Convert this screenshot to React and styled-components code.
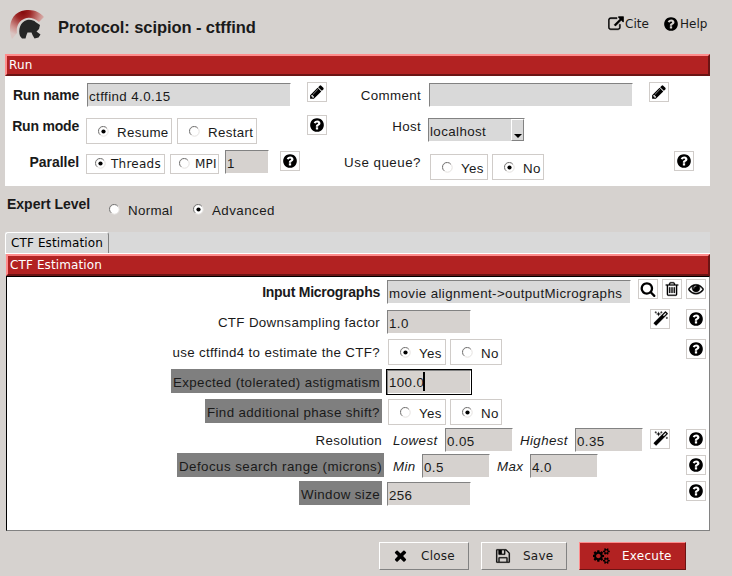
import React from "react";
import styled, { createGlobalStyle, css } from "styled-components";

const GlobalStyle = createGlobalStyle`
  * { box-sizing: border-box; }
  html, body { margin: 0; padding: 0; background: #d6d2cf; }
  body { font-family: "Liberation Sans", sans-serif; overflow: hidden; }
`;

const sans = `"Liberation Sans", sans-serif`;
const deja = `"DejaVu Sans", sans-serif`;

/* shared spacing for items that sit in a row */
const spaced = css`
  flex: none;
  margin-left: ${(p) => p.$l || 0}px;
  margin-top: ${(p) => p.$t || 0}px;
`;

const Window = styled.div`
  width: 732px;
  height: 576px;
  background: #d6d2cf;
  color: #1a1a1a;
  font: 13.33px ${sans};
  display: flex;
  flex-direction: column;
`;
const Header = styled.header`
  display: flex;
  height: 54px;
  padding-left: 9px;
`;
const Title = styled.h1`
  margin: 17px 0 0 14px;
  width: 536px;
  font: bold 16.5px/20px ${sans};
  letter-spacing: -0.08px;
`;
const HeaderLink = styled.a`
  ${spaced}
  display: flex;
  font: 12px/16px ${deja};
  white-space: nowrap;
  width: ${(p) => p.$w}px;
  svg { flex: none; margin-right: 1px; }
`;
const SectionBar = styled.div`
  height: 22px;
  margin: 0 22px 0 ${(p) => p.$l}px;
  padding-left: 2px;
  background: #b22222;
  border: 2px solid;
  border-color: #ff8c8c #6b1414 #6b1414 #ff8c8c;
  color: #fff;
  font: 12px/18px ${deja};
  letter-spacing: 0.12px;
`;
const RunPanel = styled.section`
  height: 110px;
  margin: 0 22px 0 5px;
  background: #fff;
`;
const Row = styled.div`
  display: flex;
  align-items: flex-start;
  height: ${(p) => p.$h}px;
`;
const Label = styled.label`
  ${spaced}
  width: ${(p) => p.$w}px;
  text-align: ${(p) => (p.$left ? "left" : "right")};
  font: ${(p) => (p.$bold ? "bold 14px" : "13.33px")}/18px ${sans};
  letter-spacing: ${(p) => p.$s ?? (p.$bold ? -0.2 : 0.35)}px;
  white-space: nowrap;
`;
const LabelCell = styled.div`
  display: flex;
  justify-content: flex-end;
  flex: none;
  width: ${(p) => p.$w || 375}px;
`;
const AdvancedLabel = styled.label`
  ${spaced}
  width: ${(p) => p.$w}px;
  height: 24px;
  padding-left: 2px;
  background: #7f7f7f;
  font: 13.33px/27px ${sans};
  letter-spacing: ${(p) => p.$s ?? 0.38}px;
  white-space: nowrap;
`;
const Hint = styled.em`
  ${spaced}
  width: ${(p) => p.$w}px;
  font: italic 13.33px/18px ${sans};
  letter-spacing: ${(p) => p.$s ?? 0.38}px;
  white-space: nowrap;
`;
const Entry = styled.div`
  ${spaced}
  width: ${(p) => p.$w}px;
  height: 24px;
  padding-left: 1px;
  background: ${(p) => (p.$light ? "#d9d9d9" : "#d6d2cf")};
  border: 1px solid;
  border-color: #828282 #fff #fff #828282;
  font: 13.33px/25px ${sans};
  letter-spacing: ${(p) => p.$s ?? 0.4}px;
  white-space: nowrap;
`;
const FocusedEntry = styled(Entry)`
  display: flex;
  height: 26px;
  padding-left: 2px;
  border: 1px solid #000;
  box-shadow: inset 1px 1px 0 #828282, inset -1px -1px 0 #fff;
  line-height: 26px;
`;
const Caret = styled.span`
  width: 2px;
  height: 19px;
  margin: 2px 0 0 -1px;
  background: #000;
`;
const Combo = styled.div`
  ${spaced}
  display: flex;
  justify-content: space-between;
  width: 97px;
  height: 24px;
  padding-left: 1px;
  background: #d9d9d9;
  border: 1px solid;
  border-color: #828282 #fff #fff #828282;
  font: 13.33px/26px ${sans};
  letter-spacing: 0.4px;
`;
const ComboArrow = styled.span`
  display: flex;
  align-items: flex-end;
  justify-content: center;
  width: 13px;
  height: 22px;
  padding-bottom: 2px;
  border: 1px solid;
  border-color: #fff #828282 #828282 #fff;
`;
const RadioBox = styled.div`
  ${spaced}
  display: flex;
  width: ${(p) => p.$w}px;
  height: ${(p) => (p.$small ? 20 : 26)}px;
  border: 1px solid ${(p) => (p.$plain ? "transparent" : "#d0ccc9")};
  padding-left: ${(p) => (p.$small ? 8 : 11)}px;
  font: ${(p) => (p.$small ? `12px/18px ${deja}` : `13.33px/27px ${sans}`)};
  letter-spacing: ${(p) => (p.$small ? 0.25 : p.$s ?? 0.32)}px;
  white-space: nowrap;
  svg { flex: none; margin: ${(p) => (p.$small ? "3px 5px 0 0" : "7px 8px 0 0")}; }
`;
const IconButton = styled.button`
  ${spaced}
  display: flex;
  align-items: center;
  justify-content: center;
  width: 20px;
  height: 20px;
  padding: 0;
  background: #fff;
  border: 1px solid #d0ccc9;
  svg { flex: none; }
`;
const ExpertBar = styled.div`
  display: flex;
  align-items: flex-start;
  height: 46px;
`;
const TabStrip = styled.div`
  height: 22px;
  margin: 0 22px 0 5px;
  background: #d9d9d9;
  border-bottom: 1px solid #fff;
`;
const Tab = styled.div`
  width: 104px;
  height: 21px;
  padding-left: 5px;
  border: 1px solid;
  border-width: 1px 1px 0;
  border-color: #fff #828282 #fff #fff;
  border-radius: 3px 3px 0 0;
  color: #000;
  font: 12px/20px ${deja};
  letter-spacing: 0.12px;
`;
const FormPanel = styled.section`
  height: 255px;
  margin: 0 22px 0 6px;
  background: #fff;
  border: 1px solid;
  border-color: #000 #828282 #828282 #000;
`;
const ButtonBar = styled.footer`
  display: flex;
  gap: 12px;
  padding: 11px 0 0 379px;
`;
const ActionButton = styled.button`
  display: flex;
  align-items: center;
  flex: none;
  width: ${(p) => p.$w}px;
  height: 28px;
  padding: 0 0 1px ${(p) => p.$pad}px;
  background: ${(p) => (p.$primary ? "#b22222" : "#d6d2cf")};
  border: 1px solid;
  border-color: ${(p) => (p.$primary ? "#ff8c8c #6b1414 #6b1414 #ff8c8c" : "#fff #828282 #828282 #fff")};
  color: ${(p) => (p.$primary ? "#fff" : "#1a1a1a")};
  font: 12px ${deja};
  letter-spacing: 0.25px;
  svg { flex: none; margin-right: ${(p) => p.$gap}px; }
`;

const paths = {
  pencil:
    "M491 1536l91-91-235-235-91 91v107h128v128h107zm523-928q0-22-22-22-10 0-17 7l-542 542q-7 7-7 17 0 22 22 22 10 0 17-7l542-542q7-7 7-17zm-54-192l416 416-832 832h-416v-416zm683 96q0 53-37 90l-166 166-416-416 166-165q36-38 90-38 53 0 91 38l235 234q37 39 37 91z",
  help:
    "M1024 1376v-192q0-14-9-23t-23-9h-192q-14 0-23 9t-9 23v192q0 14 9 23t23 9h192q14 0 23-9t9-23zm256-672q0-88-55.5-163t-138.5-116-170-41q-243 0-371 213-15 24 8 42l132 100q7 6 19 6 16 0 25-12 53-68 86-92 34-24 86-24 48 0 85.5 26t37.5 59q0 38-20 61t-68 45q-63 28-115.5 86.5t-52.5 125.5v36q0 14 9 23t23 9h192q14 0 23-9t9-23q0-19 21.5-49.5t54.5-49.5q32-18 49-28.5t46-35 44.5-48 28-60.5 12.5-81zm384 192q0 209-103 385.5t-279.5 279.5-385.5 103-385.5-103-279.5-279.5-103-385.5 103-385.5 279.5-279.5 385.5-103 385.5 103 279.5 279.5 103 385.5z",
  search:
    "M1216 832q0-185-131.5-316.5t-316.5-131.5-316.5 131.5-131.5 316.5 131.5 316.5 316.5 131.5 316.5-131.5 131.5-316.5zm512 832q0 52-38 90t-90 38q-54 0-90-38l-343-342q-179 124-399 124-143 0-273.5-55.5t-225-150-150-225-55.5-273.5 55.5-273.5 150-225 225-150 273.5-55.5 273.5 55.5 225 150 150 225 55.5 273.5q0 220-124 399l343 343q37 37 37 90z",
  trash:
    "M704 736v576q0 14-9 23t-23 9h-64q-14 0-23-9t-9-23v-576q0-14 9-23t23-9h64q14 0 23 9t9 23zm256 0v576q0 14-9 23t-23 9h-64q-14 0-23-9t-9-23v-576q0-14 9-23t23-9h64q14 0 23 9t9 23zm256 0v576q0 14-9 23t-23 9h-64q-14 0-23-9t-9-23v-576q0-14 9-23t23-9h64q14 0 23 9t9 23zm128 724v-948h-896v948q0 22 7 40.5t14.5 27 10.5 8.5h832q3 0 10.5-8.5t14.5-27 7-40.5zm-672-1076h448l-48-117q-7-9-17-11h-317q-10 2-17 11zm928 32v64q0 14-9 23t-23 9h-96v948q0 83-47 143.5t-113 60.5h-832q-66 0-113-58.5t-47-141.5v-952h-96q-14 0-23-9t-9-23v-64q0-14 9-23t23-9h309l70-167q15-37 54-63t79-26h320q40 0 79 26t54 63l70 167h309q14 0 23 9t9 23z",
  eye:
    "M1664 960q-152-236-381-353 61 104 61 225 0 185-131.5 316.5t-316.5 131.5-316.5-131.5-131.5-316.5q0-121 61-225-229 117-381 353 133 205 333.5 326.5t434.5 121.5 434.5-121.5 333.5-326.5zm-720-384q0-20-14-34t-34-14q-125 0-214.5 89.5t-89.5 214.5q0 20 14 34t34 14 34-14 14-34q0-86 61-147t147-61q20 0 34-14t14-34zm848 384q0 34-20 69-140 230-376.5 368.5t-499.5 138.5-499.5-139-376.5-368q-20-35-20-69t20-69q140-229 376.5-368t499.5-139 499.5 139 376.5 368q20 35 20 69z",
  magic:
    "M1254 581l293-293-107-107-293 293zm447-293q0 27-18 45l-1286 1286q-18 18-45 18t-45-18l-198-198q-18-18-18-45t18-45l1286-1286q18-18 45-18t45 18l198 198q18 18 18 45zm-1351-190l98 30-98 30-30 98-30-98-98-30 98-30 30-98zm350 162l196 60-196 60-60 196-60-196-196-60 196-60 60-196zm930 478l98 30-98 30-30 98-30-98-98-30 98-30 30-98zm-640-640l98 30-98 30-30 98-30-98-98-30 98-30 30-98z",
  link:
    "M1408 928v320q0 119-84.5 203.5t-203.5 84.5h-832q-119 0-203.5-84.5t-84.5-203.5v-832q0-119 84.5-203.5t203.5-84.5h704q14 0 23 9t9 23v64q0 14-9 23t-23 9h-704q-66 0-113 47t-47 113v832q0 66 47 113t113 47h832q66 0 113-47t47-113v-320q0-14 9-23t23-9h64q14 0 23 9t9 23zm384-864v512q0 26-19 45t-45 19-45-19l-176-176-652 652q-10 10-23 10t-23-10l-114-114q-10-10-10-23t10-23l652-652-176-176q-19-19-19-45t19-45 45-19h512q26 0 45 19t19 45z",
  close:
    "M1490 1322q0 40-28 68l-136 136q-28 28-68 28t-68-28l-294-294-294 294q-28 28-68 28t-68-28l-136-136q-28-28-28-68t28-68l294-294-294-294q-28-28-28-68t28-68l136-136q28-28 68-28t68 28l294 294 294-294q28-28 68-28t68 28l136 136q28 28 28 68t-28 68l-294 294 294 294q28 28 28 68z",
  save:
    "M512 1536h768v-384h-768v384zm896 0h128v-896q0-14-10-38.5t-20-34.5l-281-281q-10-10-34-20t-39-10v416q0 40-28 68t-68 28h-576q-40 0-68-28t-28-68v-416h-128v1280h128v-416q0-40 28-68t68-28h832q40 0 68 28t28 68v416zm-384-928v-320q0-13-9.5-22.5t-22.5-9.5h-192q-13 0-22.5 9.5t-9.5 22.5v320q0 13 9.5 22.5t22.5 9.5h192q13 0 22.5-9.5t9.5-22.5zm640 32v928q0 40-28 68t-68 28h-1344q-40 0-68-28t-28-68v-1344q0-40 28-68t68-28h928q40 0 88 20t76 48l280 280q28 28 48 76t20 88z",
  cog:
    "M832 896q0-106-75-181t-181-75-181 75-75 181 75 181 181 75 181-75 75-181zM1216 805v185q0 10-7 19.5t-16 10.5l-155 24q-11 35-32 76 34 48 90 115 7 11 7 20 0 12-7 19-23 30-82.5 89.5t-78.5 59.5q-11 0-21-7l-115-90q-37 19-77 31-11 108-23 155-7 24-30 24h-186q-11 0-20-7.5t-10-17.5l-23-153q-34-10-75-31l-118 89q-7 7-20 7-11 0-21-8-144-133-144-160 0-9 7-19 10-14 41-53t47-61q-23-44-35-82l-152-24q-10-1-17-9.5t-7-19.5v-185q0-10 7-19.5t16-10.5l155-24q11-35 32-76-34-48-90-115-7-11-7-20 0-12 7-20 22-30 82-89t79-59q11 0 21 7l115 90q34-18 77-32 11-108 23-154 7-24 30-24h186q11 0 20 7.5t10 17.5l23 153q34 10 75 31l118-89q8-7 20-7 11 0 21 8 144 133 144 160 0 8-7 19-12 16-42 54t-45 60q23 48 34 82l152 23q10 2 17 10.5t7 19.5z",
  smallCog:
    "M1600 1408q0-52-38-90t-90-38-90 38-38 90q0 53 37.5 90.5t90.5 37.5 90.5-37.5 37.5-90.5zM1856 1338v140q0 16-149 31-12 27-30 52 51 113 51 138 0 4-4 7-122 71-124 71-8 0-46-47t-52-68q-20 2-30 2t-30-2q-14 21-52 68t-46 47q-2 0-124-71-4-3-4-7 0-25 51-138-18-25-30-52-149-15-149-31v-140q0-16 149-31 13-29 30-52-51-113-51-138 0-4 4-7 4-2 35-20t59-34 30-16q8 0 46 46.5t52 67.5q20-2 30-2t30 2q51-71 92-112l6-2q4 0 124 70 4 3 4 7 0 25-51 138 17 23 30 52 149 15 149 31z",
};

const Icon = ({ name, size = 16, box = "0 0 1792 1792", w, weight = 0 }) => (
  <svg width={w || size} height={size} viewBox={box} fill="#000" fillRule="evenodd" stroke="#000" strokeWidth={weight}>
    <path d={paths[name]} />
  </svg>
);
const CogsIcon = () => (
  <svg width="17" height="16" viewBox="0 0 1856 1792" fill="#000" fillRule="evenodd">
    <path d={paths.cog} />
    <path d={paths.smallCog} />
    <path d={paths.smallCog} transform="translate(0 -1024)" />
  </svg>
);

const Dot = ({ on }) => (
  <svg width="11" height="11" viewBox="0 0 11 11">
    <circle cx="5.5" cy="5.5" r="4.7" fill="#fff" stroke="#e4e1df" strokeWidth="1" />
    <path d="M2.2 8.8A4.7 4.7 0 1 1 8.8 2.2" fill="none" stroke="#777" strokeWidth="1" />
    {on && <circle cx="5.5" cy="5.5" r="2.1" fill="#000" />}
  </svg>
);

const Logo = () => (
  <svg width="35" height="54" viewBox="0 0 35 54">
    <defs>
      <radialGradient id="crest" gradientUnits="userSpaceOnUse" cx="14" cy="12" r="24">
        <stop offset="0" stopColor="#850a0b" />
        <stop offset="0.3" stopColor="#9c2625" />
        <stop offset="0.75" stopColor="#cf9490" />
        <stop offset="1" stopColor="#d9c4c1" />
      </radialGradient>
    </defs>
    <path d="M3 39C-2 27 2 12 16 10.3C24 9 31 12 35 17L30 22C25 18 20 17 16 18.5C9 21 7 28 8 33Z" fill="url(#crest)" />
    <path d="M11 36C9 30 11 22 18 20C22 19.3 25 20.5 26.5 22L31 25L30 29L27.5 31.5L31.5 34.5L29.5 37.5L25.5 38.5L23.5 35L22.5 32.5L18.5 32.5L17.5 35L16.5 38.5L13 38.5Z" fill="#262626" />
  </svg>
);

const HelpButton = (p) => (
  <IconButton {...p} aria-label="Help">
    <Icon name="help" />
  </IconButton>
);
const MagicButton = (p) => (
  <IconButton {...p} aria-label="Wizard">
    <Icon name="magic" w={15} box="0 0 1728 1792" weight={30} />
  </IconButton>
);
const Radio = ({ on, children, ...p }) => (
  <RadioBox {...p}>
    <Dot on={on} />
    {children}
  </RadioBox>
);

export default function App() {
  return (
    <Window>
      <GlobalStyle />
      <Header>
        <Logo />
        <Title>Protocol: scipion - ctffind</Title>
        <HeaderLink $l={14} $t={16} $w={56}>
          <Icon name="link" weight={50} box="-30 -60 1852 1852" />
          Cite
        </HeaderLink>
        <HeaderLink $t={16} $w={50} $l={-1}>
          <Icon name="help" />
          Help
        </HeaderLink>
      </Header>

      <SectionBar $l={5}>Run</SectionBar>
      <RunPanel>
        <Row $h={34}>
          <Label $bold $w={74} $t={10}>Run name</Label>
          <Entry $light $l={8} $t={7} $w={204}>ctffind 4.0.15</Entry>
          <IconButton $l={16} $t={6} aria-label="Edit"><Icon name="pencil" /></IconButton>
          <Label $w={94} $t={11}>Comment</Label>
          <Entry $light $l={8} $t={7} $w={204} />
          <IconButton $l={16} $t={6} aria-label="Edit"><Icon name="pencil" /></IconButton>
        </Row>
        <Row $h={38}>
          <Label $bold $w={74} $t={7}>Run mode</Label>
          <Radio on $l={7} $t={8} $w={86}>Resume</Radio>
          <Radio $l={5} $t={8} $w={80}>Restart</Radio>
          <HelpButton $l={50} $t={5} />
          <Label $w={94} $t={8}>Host</Label>
          <Combo $l={7} $t={8}>
            localhost
            <ComboArrow>
              <svg width="8" height="4" viewBox="0 0 8 4"><path d="M0 0H8L4 4Z" fill="#000" /></svg>
            </ComboArrow>
          </Combo>
        </Row>
        <Row $h={38}>
          <Label $bold $w={74} $t={5} $s={-0.05}>Parallel</Label>
          <Radio on $small $l={7} $t={6} $w={79}>Threads</Radio>
          <Radio $small $l={5} $t={6} $w={49}>MPI</Radio>
          <Entry $l={6} $t={2} $w={44}>1</Entry>
          <HelpButton $l={11} $t={3} />
          <Label $w={121} $t={6} $s={0.5}>Use queue?</Label>
          <Radio $l={9} $t={6} $w={58}>Yes</Radio>
          <Radio on $l={4} $t={6} $w={52}>No</Radio>
          <HelpButton $l={130} $t={3} />
        </Row>
      </RunPanel>

      <ExpertBar>
        <Label $bold $left $l={7} $t={9} $w={90} $s={0}>Expert Level</Label>
        <Radio $plain $t={10} $w={84}>Normal</Radio>
        <Radio on $plain $t={10} $w={100} $s={0.45}>Advanced</Radio>
      </ExpertBar>

      <TabStrip>
        <Tab>CTF Estimation</Tab>
      </TabStrip>
      <SectionBar $l={6}>CTF Estimation</SectionBar>
      <FormPanel>
        <Row $h={30}>
          <Label $bold $w={373} $t={6} $s={-0.25}>Input Micrographs</Label>
          <Entry $light $l={7} $t={3} $w={244}>movie alignment-&gt;outputMicrographs</Entry>
          <IconButton $l={7} $t={2} aria-label="Search"><Icon name="search" /></IconButton>
          <IconButton $l={4} $t={2} aria-label="Delete"><Icon name="trash" weight={30} /></IconButton>
          <IconButton $l={4} $t={2} aria-label="View"><Icon name="eye" weight={50} box="-30 0 1852 1852" /></IconButton>
        </Row>
        <Row $h={30}>
          <Label $w={373} $t={7}>CTF Downsampling factor</Label>
          <Entry $l={7} $t={3} $w={84}>1.0</Entry>
          <MagicButton $l={179} $t={2} />
          <HelpButton $l={16} $t={2} />
        </Row>
        <Row $h={30}>
          <Label $w={373} $t={7}>use ctffind4 to estimate the CTF?</Label>
          <Radio on $l={8} $t={2} $w={58}>Yes</Radio>
          <Radio $l={4} $t={2} $w={52}>No</Radio>
          <HelpButton $l={184} $t={2} />
        </Row>
        <Row $h={30}>
          <LabelCell><AdvancedLabel $t={2} $w={211}>Expected (tolerated) astigmatism</AdvancedLabel></LabelCell>
          <FocusedEntry $l={4} $t={2} $w={86}>100.0<Caret /></FocusedEntry>
        </Row>
        <Row $h={30}>
          <LabelCell><AdvancedLabel $t={2} $w={177}>Find additional phase shift?</AdvancedLabel></LabelCell>
          <Radio $l={6} $t={2} $w={58}>Yes</Radio>
          <Radio on $l={4} $t={2} $w={52}>No</Radio>
        </Row>
        <Row $h={25}>
          <Label $w={375} $t={5}>Resolution</Label>
          <Hint $l={11} $t={5} $w={52}>Lowest</Hint>
          <Entry $t={1} $w={68}>0.05</Entry>
          <Hint $l={7} $t={5} $w={55}>Highest</Hint>
          <Entry $t={1} $w={68}>0.35</Entry>
          <MagicButton $l={7} $t={2} />
          <HelpButton $l={16} $t={2} />
        </Row>
        <Row $h={27}>
          <LabelCell $w={377}><AdvancedLabel $t={1} $w={207} $s={0.45}>Defocus search range (microns)</AdvancedLabel></LabelCell>
          <Hint $l={9} $t={6} $w={29}>Min</Hint>
          <Entry $t={2} $w={68}>0.5</Entry>
          <Hint $l={7} $t={6} $w={33}>Max</Hint>
          <Entry $t={2} $w={68}>4.0</Entry>
          <HelpButton $l={88} $t={3} />
        </Row>
        <Row $h={30}>
          <LabelCell><AdvancedLabel $t={2} $w={83}>Window size</AdvancedLabel></LabelCell>
          <Entry $l={5} $t={3} $w={84}>256</Entry>
          <HelpButton $l={215} $t={2} />
        </Row>
      </FormPanel>

      <ButtonBar>
        <ActionButton $w={90} $pad={12} $gap={12}><Icon name="close" size={17} />Close</ActionButton>
        <ActionButton $w={86} $pad={13} $gap={12}><Icon name="save" weight={20} />Save</ActionButton>
        <ActionButton $w={107} $pad={13} $gap={12} $primary><CogsIcon />Execute</ActionButton>
      </ButtonBar>
    </Window>
  );
}
